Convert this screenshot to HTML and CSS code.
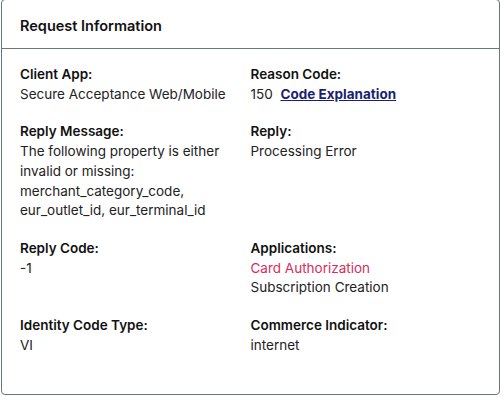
FILE: index.html
```html
<!DOCTYPE html>
<html lang="en">
<head>
    <meta charset="UTF-8">
    <meta name="viewport" content="width=device-width, initial-scale=1.0">
    <title>Request Information</title>
    <link rel="stylesheet" href="styles.css">
</head>
<body>
    <section class="card">
        <header class="card-header">
            <h2>Request Information</h2>
        </header>
        <div class="card-body">
            <div class="field">
                <div class="label">Client App:</div>
                <div class="value">Secure Acceptance Web/Mobile</div>
            </div>
            <div class="field">
                <div class="label">Reason Code:</div>
                <div class="value">150 <a href="#" class="code-link">Code Explanation</a></div>
            </div>
            <div class="field">
                <div class="label">Reply Message:</div>
                <div class="value">The following property is either invalid or missing: merchant_category_code, eur_outlet_id, eur_terminal_id</div>
            </div>
            <div class="field">
                <div class="label">Reply:</div>
                <div class="value">Processing Error</div>
            </div>
            <div class="field">
                <div class="label">Reply Code:</div>
                <div class="value">-1</div>
            </div>
            <div class="field">
                <div class="label">Applications:</div>
                <div class="value app-error">Card Authorization</div>
                <div class="value">Subscription Creation</div>
            </div>
            <div class="field">
                <div class="label">Identity Code Type:</div>
                <div class="value">VI</div>
            </div>
            <div class="field">
                <div class="label">Commerce Indicator:</div>
                <div class="value">internet</div>
            </div>
        </div>
    </section>
</body>
</html>
```

FILE: styles.css
```css
body {
    font-family: Inter, "Liberation Sans", sans-serif;
    background-color: #fff;
    color: #1c1c28;
    margin: 0;
    padding: 0 4px 0 1px;
}
.card {
    margin-top: -1px;
    border: 1px solid #6b7580;
    border-radius: 4px;
    height: 396px;
    box-sizing: border-box;
}
.card-header {
    height: 49px;
    border-bottom: 1px solid #6b7580;
    display: flex;
    align-items: center;
    padding: 2px 18px 0;
    box-sizing: border-box;
}
.card-header h2 {
    margin: 0;
    font-size: 14.5px;
    font-weight: 600;
    color: #111;
}
.card-body {
    display: grid;
    grid-template-columns: 1fr 1fr;
    row-gap: 18px;
    padding: 16px 18px;
}
.field {
    font-size: 13.5px;
    line-height: 19.7px;
}
.label {
    font-weight: 600;
    color: #111;
}
.value {
    color: #222;
}
.code-link {
    margin-left: 4px;
    font-weight: 700;
    color: #1a1f71;
    text-decoration: underline;
}
.app-error {
    color: #d62d5c;
}
```
